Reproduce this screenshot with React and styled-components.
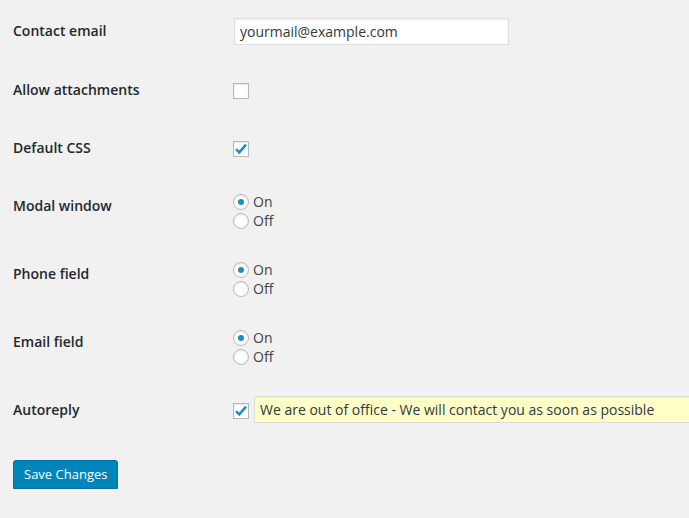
import React from 'react'
import styled, { createGlobalStyle } from 'styled-components'

const Global = createGlobalStyle`
  html, body {
    margin: 0;
    background: #f1f1f1;
  }
  body {
    font-family: "Open Sans", "Liberation Sans", sans-serif;
    font-size: 14px;
    color: #32373c;
  }
`

const Page = styled.form`
  padding: 1px 0 0 13px;
  width: 676px;
  overflow: hidden;
`

const Row = styled.div`
  display: grid;
  grid-template-columns: 220px 1fr;
  height: ${p => p.$h}px;
`

const Label = styled.div`
  padding: 21px 0 19px;
  font-weight: 600;
  font-size: 14px;
  line-height: 18.2px;
  color: #23282d;
`

const Field = styled.div`
  padding-top: ${p => p.$top}px;
  display: flex;
  flex-direction: ${p => (p.$column ? 'column' : 'row')};
  align-items: flex-start;
  gap: ${p => p.$gap || 0}px;
  min-width: 0;
`

const TextInput = styled.div`
  box-sizing: border-box;
  width: ${p => p.$w || 275}px;
  height: ${p => p.$hgt || 27}px;
  margin-left: ${p => p.$ml ?? 1}px;
  padding: 0 5px;
  background: ${p => p.$bg || '#fff'};
  border: 1px solid #ddd;
  box-shadow: inset 0 1px 2px rgba(0, 0, 0, 0.07);
  font-size: 14px;
  line-height: 25px;
  color: #32373c;
  white-space: nowrap;
  flex-shrink: 0;
`

const Box = styled.span`
  box-sizing: border-box;
  width: 16px;
  height: 16px;
  background: #fff;
  border: 1px solid #b4b9be;
  box-shadow: inset 0 1px 2px rgba(0, 0, 0, 0.1);
  display: flex;
  align-items: center;
  justify-content: center;
  flex-shrink: 0;
  margin-top: ${p => p.$mt || 0}px;
`

const Option = styled.label`
  display: flex;
  align-items: center;
  height: 19px;
  gap: 4px;
  font-size: 14px;
  color: #444;
`

const Radio = styled.span`
  box-sizing: border-box;
  width: 16px;
  height: 16px;
  border-radius: 50%;
  background: #fff;
  border: 1px solid #b4b9be;
  box-shadow: inset 0 1px 2px rgba(0, 0, 0, 0.1);
  display: flex;
  align-items: center;
  justify-content: center;
  &::before {
    content: '';
    width: 6px;
    height: 6px;
    border-radius: 50%;
    background: ${p => (p.$on ? '#1e8cbe' : 'transparent')};
  }
`

const Submit = styled.div`
  padding-top: 22px;
`

const Button = styled.button`
  box-sizing: border-box;
  height: 29px;
  padding: 0 10px 1px;
  background: #0085ba;
  border: 1px solid #0073aa;
  border-radius: 3px;
  box-shadow: 0 1px 0 #006799;
  color: #fff;
  font-family: "Open Sans", "Liberation Sans", sans-serif;
  font-size: 13px;
  line-height: 26px;
  cursor: pointer;
`

function Check({ checked, mt }) {
  return (
    <Box $mt={mt}>
      {checked && (
        <svg width="14" height="14" viewBox="0 0 14 14">
          <path d="M2 7.2 L5.3 10.4 L12 2.6" fill="none" stroke="#1e8cbe" strokeWidth="2.4" />
        </svg>
      )}
    </Box>
  )
}

function OnOff() {
  return (
    <>
      <Option><Radio $on />On</Option>
      <Option><Radio />Off</Option>
    </>
  )
}

export default function App() {
  return (
    <>
      <Global />
      <Page>
        <Row $h={59}>
          <Label>Contact email</Label>
          <Field $top={17}>
            <TextInput>yourmail@example.com</TextInput>
          </Field>
        </Row>
        <Row $h={58}>
          <Label>Allow attachments</Label>
          <Field $top={23}><Check /></Field>
        </Row>
        <Row $h={58}>
          <Label>Default CSS</Label>
          <Field $top={23}><Check checked /></Field>
        </Row>
        <Row $h={68}>
          <Label>Modal window</Label>
          <Field $top={16} $column><OnOff /></Field>
        </Row>
        <Row $h={68}>
          <Label>Phone field</Label>
          <Field $top={16} $column><OnOff /></Field>
        </Row>
        <Row $h={68}>
          <Label>Email field</Label>
          <Field $top={16} $column><OnOff /></Field>
        </Row>
        <Row $h={58}>
          <Label>Autoreply</Label>
          <Field $top={16} $gap={5}>
            <Check checked mt={7} />
            <TextInput $bg="#ffffc8" $w={460} $ml={0}>
              We are out of office - We will contact you as soon as possible
            </TextInput>
          </Field>
        </Row>
        <Submit>
          <Button type="button">Save Changes</Button>
        </Submit>
      </Page>
    </>
  )
}
